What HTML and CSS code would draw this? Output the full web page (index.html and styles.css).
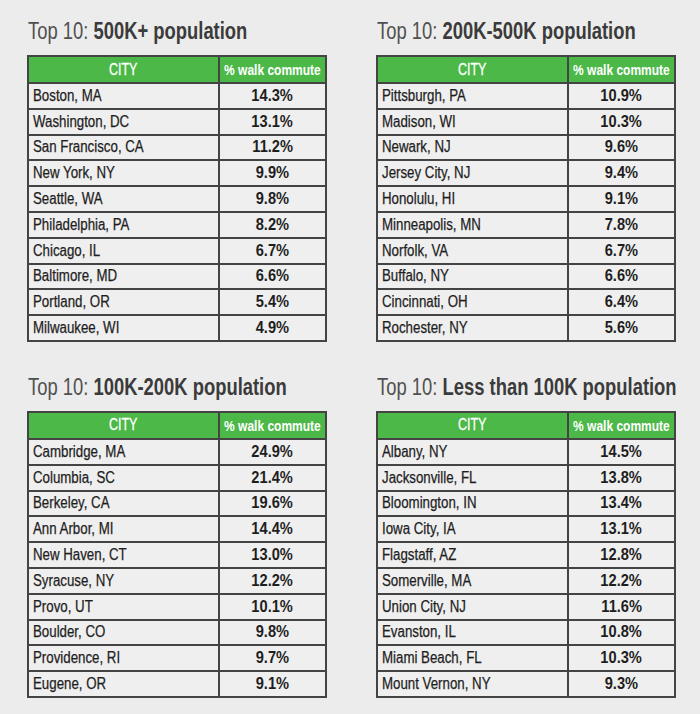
FILE: index.html
```html
<!DOCTYPE html>
<html>
<head>
<meta charset="utf-8">
<link rel="stylesheet" href="styles.css">
</head>
<body>
<div class="grid">
  <section class="block">
    <h2 class="title"><span class="sqt"><span class="lite">Top 10:</span> <b>500K+ population</b></span></h2>
    <table class="tbl">
      <thead><tr><th class="c-city"><span class="sqc">CITY</span></th><th class="c-val"><span class="sqc">% walk commute</span></th></tr></thead>
      <tbody>
        <tr><td><span class="sq">Boston, MA</span></td><td class="v"><span class="sqc">14.3%</span></td></tr>
        <tr><td><span class="sq">Washington, DC</span></td><td class="v"><span class="sqc">13.1%</span></td></tr>
        <tr><td><span class="sq">San Francisco, CA</span></td><td class="v"><span class="sqc">11.2%</span></td></tr>
        <tr><td><span class="sq">New York, NY</span></td><td class="v"><span class="sqc">9.9%</span></td></tr>
        <tr><td><span class="sq">Seattle, WA</span></td><td class="v"><span class="sqc">9.8%</span></td></tr>
        <tr><td><span class="sq">Philadelphia, PA</span></td><td class="v"><span class="sqc">8.2%</span></td></tr>
        <tr><td><span class="sq">Chicago, IL</span></td><td class="v"><span class="sqc">6.7%</span></td></tr>
        <tr><td><span class="sq">Baltimore, MD</span></td><td class="v"><span class="sqc">6.6%</span></td></tr>
        <tr><td><span class="sq">Portland, OR</span></td><td class="v"><span class="sqc">5.4%</span></td></tr>
        <tr><td><span class="sq">Milwaukee, WI</span></td><td class="v"><span class="sqc">4.9%</span></td></tr>
      </tbody>
    </table>
  </section>
  <section class="block">
    <h2 class="title"><span class="sqt"><span class="lite">Top 10:</span> <b>200K-500K population</b></span></h2>
    <table class="tbl">
      <thead><tr><th class="c-city"><span class="sqc">CITY</span></th><th class="c-val"><span class="sqc">% walk commute</span></th></tr></thead>
      <tbody>
        <tr><td><span class="sq">Pittsburgh, PA</span></td><td class="v"><span class="sqc">10.9%</span></td></tr>
        <tr><td><span class="sq">Madison, WI</span></td><td class="v"><span class="sqc">10.3%</span></td></tr>
        <tr><td><span class="sq">Newark, NJ</span></td><td class="v"><span class="sqc">9.6%</span></td></tr>
        <tr><td><span class="sq">Jersey City, NJ</span></td><td class="v"><span class="sqc">9.4%</span></td></tr>
        <tr><td><span class="sq">Honolulu, HI</span></td><td class="v"><span class="sqc">9.1%</span></td></tr>
        <tr><td><span class="sq">Minneapolis, MN</span></td><td class="v"><span class="sqc">7.8%</span></td></tr>
        <tr><td><span class="sq">Norfolk, VA</span></td><td class="v"><span class="sqc">6.7%</span></td></tr>
        <tr><td><span class="sq">Buffalo, NY</span></td><td class="v"><span class="sqc">6.6%</span></td></tr>
        <tr><td><span class="sq">Cincinnati, OH</span></td><td class="v"><span class="sqc">6.4%</span></td></tr>
        <tr><td><span class="sq">Rochester, NY</span></td><td class="v"><span class="sqc">5.6%</span></td></tr>
      </tbody>
    </table>
  </section>
  <section class="block">
    <h2 class="title"><span class="sqt"><span class="lite">Top 10:</span> <b>100K-200K population</b></span></h2>
    <table class="tbl">
      <thead><tr><th class="c-city"><span class="sqc">CITY</span></th><th class="c-val"><span class="sqc">% walk commute</span></th></tr></thead>
      <tbody>
        <tr><td><span class="sq">Cambridge, MA</span></td><td class="v"><span class="sqc">24.9%</span></td></tr>
        <tr><td><span class="sq">Columbia, SC</span></td><td class="v"><span class="sqc">21.4%</span></td></tr>
        <tr><td><span class="sq">Berkeley, CA</span></td><td class="v"><span class="sqc">19.6%</span></td></tr>
        <tr><td><span class="sq">Ann Arbor, MI</span></td><td class="v"><span class="sqc">14.4%</span></td></tr>
        <tr><td><span class="sq">New Haven, CT</span></td><td class="v"><span class="sqc">13.0%</span></td></tr>
        <tr><td><span class="sq">Syracuse, NY</span></td><td class="v"><span class="sqc">12.2%</span></td></tr>
        <tr><td><span class="sq">Provo, UT</span></td><td class="v"><span class="sqc">10.1%</span></td></tr>
        <tr><td><span class="sq">Boulder, CO</span></td><td class="v"><span class="sqc">9.8%</span></td></tr>
        <tr><td><span class="sq">Providence, RI</span></td><td class="v"><span class="sqc">9.7%</span></td></tr>
        <tr><td><span class="sq">Eugene, OR</span></td><td class="v"><span class="sqc">9.1%</span></td></tr>
      </tbody>
    </table>
  </section>
  <section class="block">
    <h2 class="title"><span class="sqt"><span class="lite">Top 10:</span> <b>Less than 100K population</b></span></h2>
    <table class="tbl">
      <thead><tr><th class="c-city"><span class="sqc">CITY</span></th><th class="c-val"><span class="sqc">% walk commute</span></th></tr></thead>
      <tbody>
        <tr><td><span class="sq">Albany, NY</span></td><td class="v"><span class="sqc">14.5%</span></td></tr>
        <tr><td><span class="sq">Jacksonville, FL</span></td><td class="v"><span class="sqc">13.8%</span></td></tr>
        <tr><td><span class="sq">Bloomington, IN</span></td><td class="v"><span class="sqc">13.4%</span></td></tr>
        <tr><td><span class="sq">Iowa City, IA</span></td><td class="v"><span class="sqc">13.1%</span></td></tr>
        <tr><td><span class="sq">Flagstaff, AZ</span></td><td class="v"><span class="sqc">12.8%</span></td></tr>
        <tr><td><span class="sq">Somerville, MA</span></td><td class="v"><span class="sqc">12.2%</span></td></tr>
        <tr><td><span class="sq">Union City, NJ</span></td><td class="v"><span class="sqc">11.6%</span></td></tr>
        <tr><td><span class="sq">Evanston, IL</span></td><td class="v"><span class="sqc">10.8%</span></td></tr>
        <tr><td><span class="sq">Miami Beach, FL</span></td><td class="v"><span class="sqc">10.3%</span></td></tr>
        <tr><td><span class="sq">Mount Vernon, NY</span></td><td class="v"><span class="sqc">9.3%</span></td></tr>
      </tbody>
    </table>
  </section>
</div>
</body>
</html>
```
FILE: styles.css
```css
html, body {
  margin: 0;
  padding: 0;
  background: #ececec;
}
body {
  font-family: "Liberation Sans", Arial, sans-serif;
  color: #222;
}
.grid {
  display: grid;
  grid-template-columns: 300px 300px;
  column-gap: 49px;
  row-gap: 31px;
  padding: 17px 0 0 27px;
  overflow: hidden;
}
.title {
  margin: 0 0 10px 1px;
  font-size: 23px;
  line-height: 28px;
  height: 28px;
  font-weight: normal;
  white-space: nowrap;
}
.sqt {
  display: inline-block;
  transform: scaleX(0.8);
  transform-origin: 0 50%;
}
.title .lite {
  color: #505050;
}
.title b {
  font-weight: bold;
  color: #3b3b3b;
}
.tbl {
  width: 300px;
  table-layout: fixed;
  border-collapse: collapse;
  background: #efefef;
}
.tbl th, .tbl td {
  border: 2px solid #444;
  padding: 0 4px;
  height: 23.8px;
  white-space: nowrap;
  vertical-align: middle;
}
.tbl th {
  background: #4cb848;
  color: #fff;
  text-align: center;
  height: 25px;
  padding: 0;
}
.c-city {
  width: 189px;
  font-size: 16px;
  font-weight: normal;
}
.c-val {
  font-size: 15px;
  font-weight: bold;
}
.tbl td {
  font-size: 16px;
  color: #1e1e1e;
  text-align: left;
  -webkit-text-stroke: 0.25px #1e1e1e;
}
.tbl td.v {
  text-align: center;
  font-size: 17px;
  font-weight: bold;
  -webkit-text-stroke: 0;
}
.sq {
  display: inline-block;
  transform: scaleX(0.83);
  transform-origin: 0 50%;
}
.sqc {
  display: inline-block;
  transform: scaleX(0.8);
  transform-origin: 50% 50%;
}
.c-val .sqc {
  margin: 0 -16px;
}
.c-city .sqc {
  transform: scaleX(0.78);
  -webkit-text-stroke: 0.3px #fff;
}
.v .sqc {
  transform: scaleX(0.86);
}
```
